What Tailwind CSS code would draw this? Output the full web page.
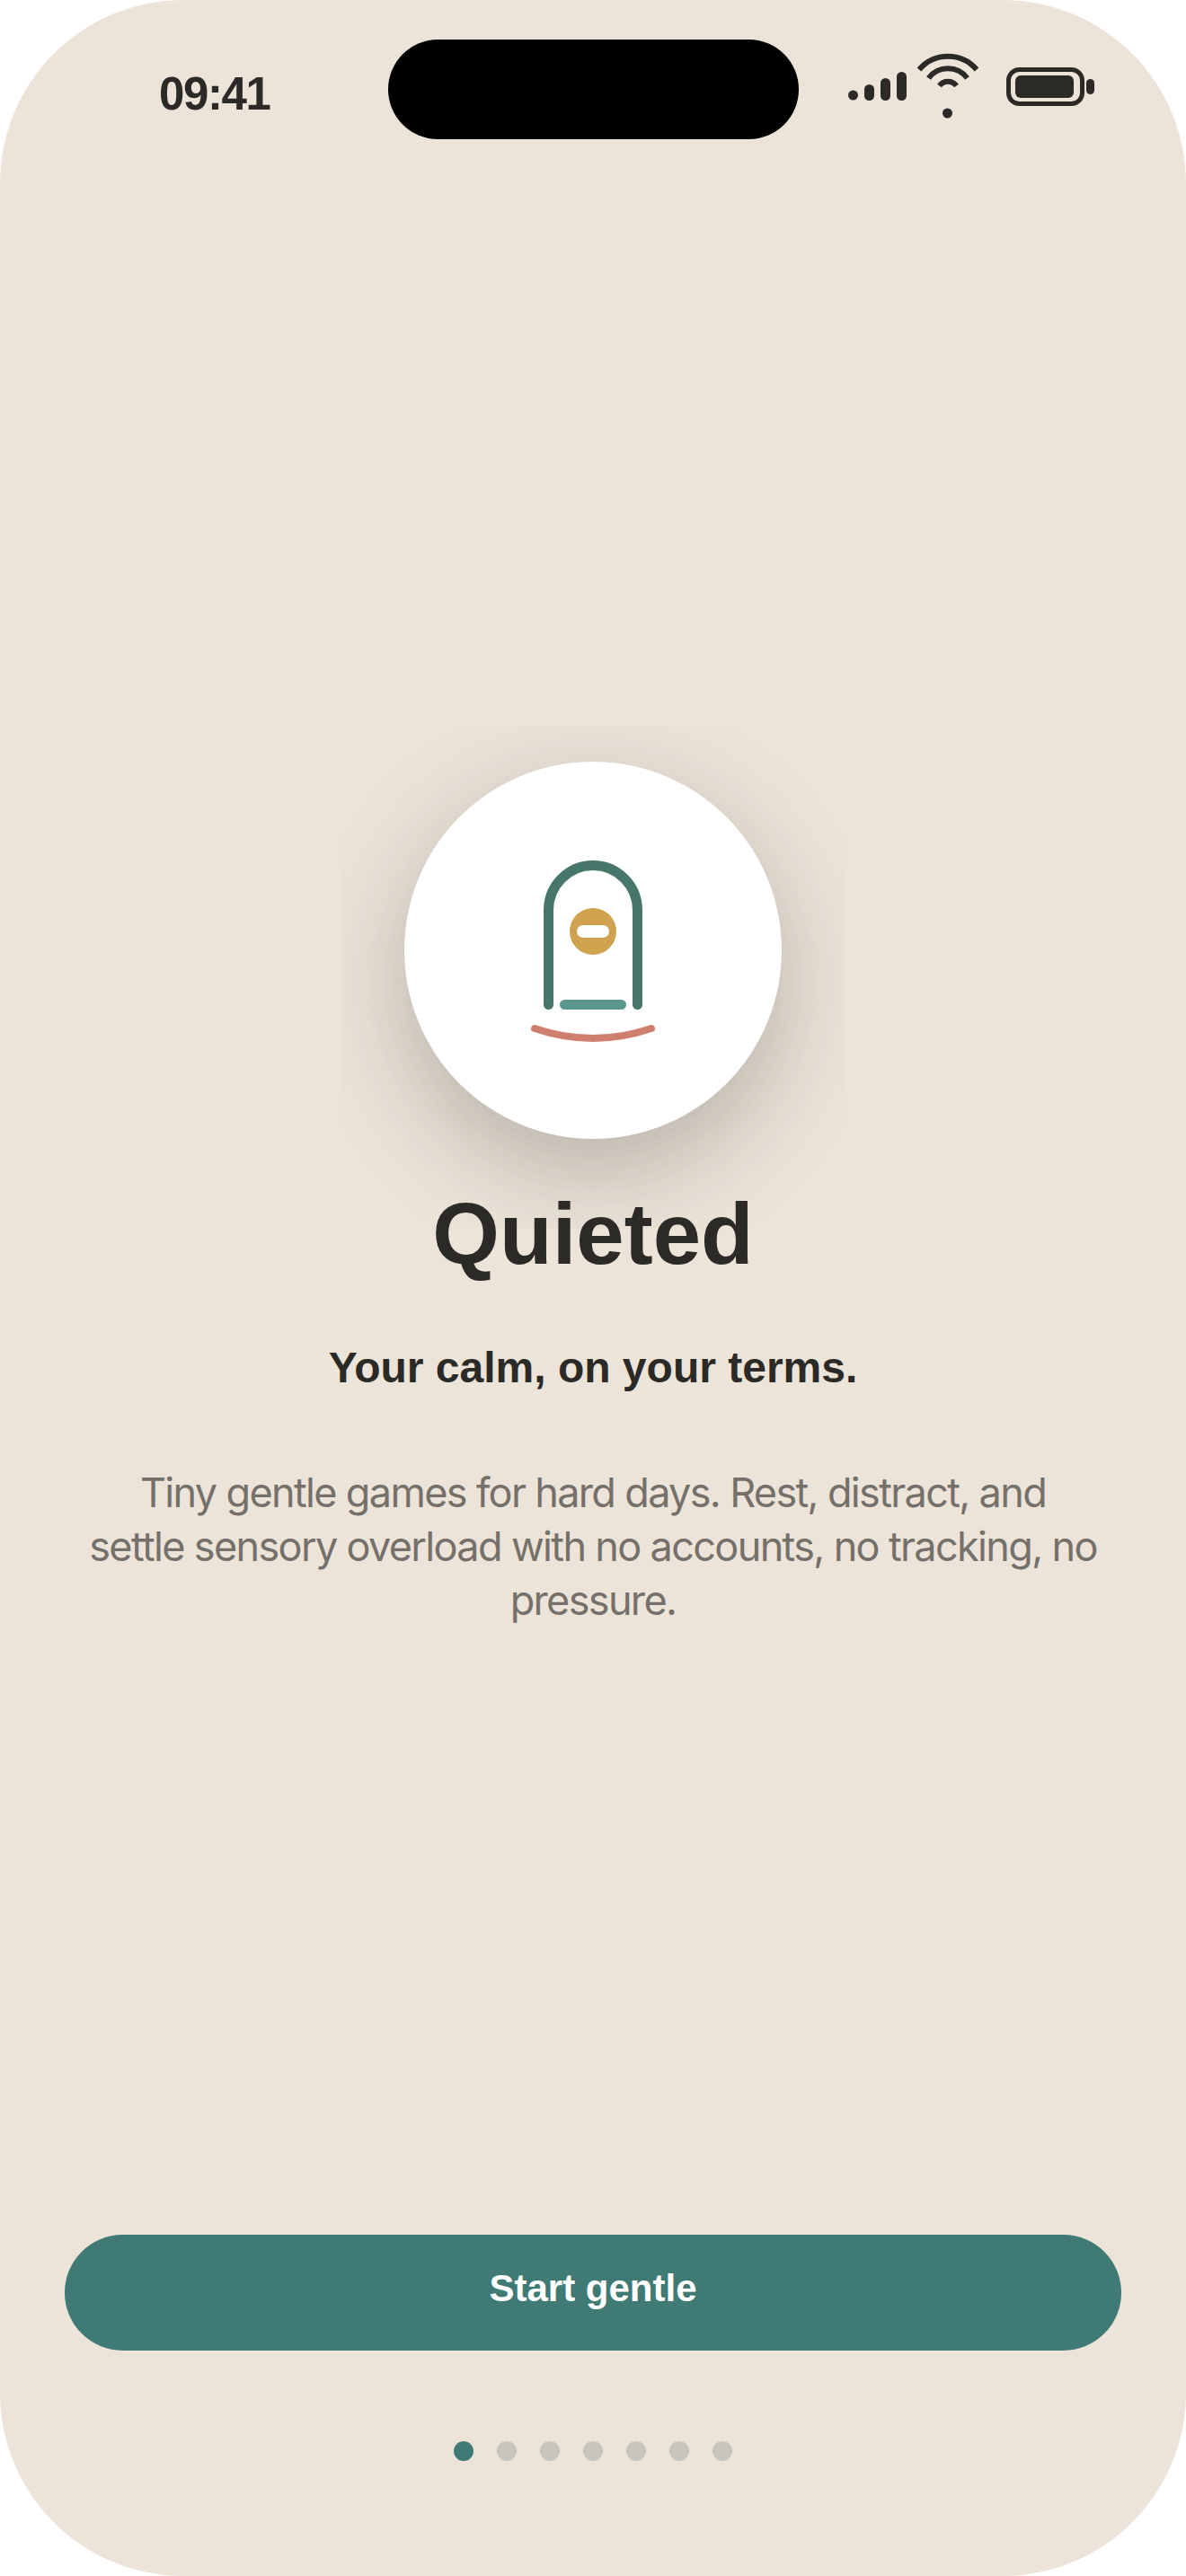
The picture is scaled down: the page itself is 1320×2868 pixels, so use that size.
<!DOCTYPE html>
<html lang="en">
<head>
  <meta charset="UTF-8" />
  <meta name="viewport" content="width=device-width, initial-scale=1.0"/>
  <title>Quieted</title>
  <script src="https://cdn.jsdelivr.net/npm/@tailwindcss/browser@4"></script>
</head>
<body class="bg-white">

  <div class="relative flex flex-col items-center w-[1320px] h-[2868px] overflow-hidden rounded-[204px] bg-[#ece4d9] pb-[128px] font-['Liberation_Sans',sans-serif] text-[#2c2a26]">

    <!-- STATUS BAR -->
    <div class="relative w-full h-[155px] shrink-0">
      <span class="absolute left-[177px] top-[77px] text-[51px] leading-[56px] font-bold tracking-[-1.4px]">09:41</span>
      <div class="absolute left-[432px] top-[44px] w-[457px] h-[111px] rounded-full bg-black"></div>
      <svg class="absolute left-[940px] top-[56px]" width="290" height="80" viewBox="940 56 290 80" fill="#2c2a26">
        <circle cx="949.5" cy="106" r="5.5"/>
        <rect x="962" y="94" width="11" height="18" rx="5.5"/>
        <rect x="980" y="87" width="11" height="25" rx="5.5"/>
        <rect x="998" y="80" width="11" height="32" rx="5.5"/>
        <path d="M1023 77.5 A42 42 0 0 1 1087 77.5 M1033.5 87 A27 27 0 0 1 1076.5 87 M1045.5 95.5 A12 12 0 0 1 1064.5 95.5" fill="none" stroke="#2c2a26" stroke-width="6"/>
        <circle cx="1054.5" cy="126" r="5.5"/>
        <rect x="1122.5" y="77.5" width="82" height="38" rx="12" fill="none" stroke="#2c2a26" stroke-width="5"/>
        <rect x="1130" y="84" width="65" height="25" rx="6"/>
        <rect x="1209" y="88" width="9" height="17" rx="4.5"/>
      </svg>
    </div>

    <!-- LOGO -->
    <div class="mt-[653px] -mb-[42px] w-[560px] h-[560px] overflow-hidden flex justify-center shrink-0">
      <div class="mt-[40px] w-[420px] h-[420px] rounded-full bg-white shadow-[0_36px_108px_rgba(44,42,38,0.28)]">
        <svg width="420" height="420" viewBox="450 847 420 420" fill="none" stroke-linecap="round">
          <path d="M610.5 1117.5 V1012.5 A49.5 50 0 0 1 709.5 1012.5 V1117.5" stroke="#47776b" stroke-width="11"/>
          <circle cx="660" cy="1036" r="26" fill="#cfa250"/>
          <rect x="642" y="1029" width="36" height="14" rx="7" fill="#ffffff"/>
          <path d="M628.5 1117.5 H691.5" stroke="#5a968c" stroke-width="11"/>
          <path d="M595 1144 Q660 1166 725 1144" stroke="#cf7f6e" stroke-width="8"/>
        </svg>
      </div>
    </div>

    <!-- TEXT -->
    <h1 class="relative text-[96px] leading-none font-bold">Quieted</h1>
    <p class="mt-[71px] text-[48px] leading-[60px] font-bold">Your calm, on your terms.</p>
    <p class="mt-[79px] w-[1122px] text-center text-[45px] leading-[60px] tracking-[-1.65px] font-['Inter',sans-serif] font-normal text-[#75706a]">Tiny gentle games for hard days. Rest, distract, and settle sensory overload with no accounts, no tracking, no pressure.</p>

    <!-- BUTTON -->
    <button class="mt-auto w-[1176px] h-[129px] pb-[11px] rounded-full bg-[#3f7a75] text-white text-[42px] font-bold">Start gentle</button>

    <!-- PAGER -->
    <div class="mt-[101px] flex gap-[26px]">
      <span class="w-[22px] h-[22px] rounded-full bg-[#3f7a75]"></span>
      <span class="w-[22px] h-[22px] rounded-full bg-[#c8c5be]"></span>
      <span class="w-[22px] h-[22px] rounded-full bg-[#c8c5be]"></span>
      <span class="w-[22px] h-[22px] rounded-full bg-[#c8c5be]"></span>
      <span class="w-[22px] h-[22px] rounded-full bg-[#c8c5be]"></span>
      <span class="w-[22px] h-[22px] rounded-full bg-[#c8c5be]"></span>
      <span class="w-[22px] h-[22px] rounded-full bg-[#c8c5be]"></span>
    </div>

  </div>

</body>
</html>
